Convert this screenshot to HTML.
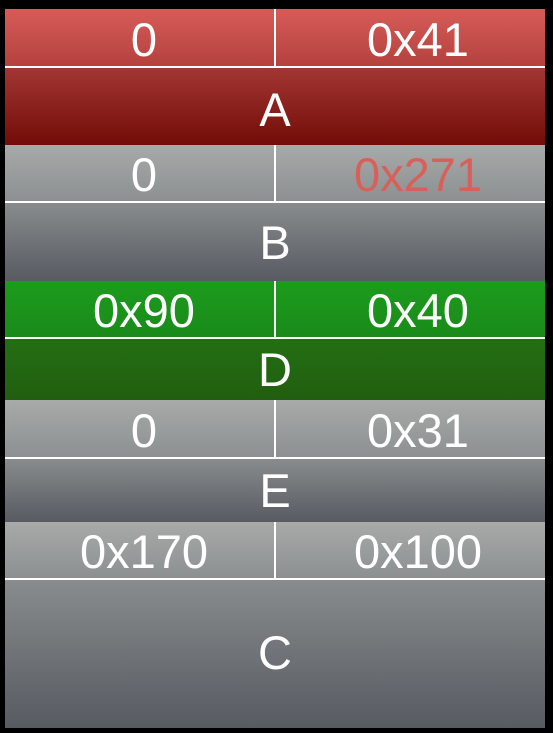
<!DOCTYPE html>
<html><head><meta charset="utf-8"><style>
html,body{margin:0;padding:0;background:#000;width:553px;height:733px;overflow:hidden}
.b{position:absolute;left:5px;width:540px;font-family:"Liberation Sans",sans-serif;color:#fff;font-size:47px}
.t{position:absolute;left:0;right:0;top:0}
.c{position:absolute;top:3px;bottom:0;display:flex;align-items:center;justify-content:center}
.l{left:4px;width:270px}.r{left:276px;width:274px}
.v{position:absolute;left:269px;width:2px;top:0;background:#fff}
.h{position:absolute;left:0;right:0;height:2px;background:#fff}
.lo{position:absolute;left:0;right:0;bottom:0;display:flex;align-items:center;justify-content:center}
.red .t{background:linear-gradient(#d75c58,#b4413e)}.red .lo{background:linear-gradient(#a33632,#720c07)}
.gr .t{background:linear-gradient(#a7aaa8,#8c9091)}.gr .lo{background:linear-gradient(#888c8d,#575b62)}
.gn .t{background:linear-gradient(#1c9c1d,#1a8a1a)}.gn .lo{background:linear-gradient(#236f13,#225e10)}
</style></head><body>

<div class="b red" style="top:9px;height:136px">
<div class="t" style="height:57px"><div class="c l">0</div><div class="c r">0x41</div></div>
<div class="v" style="height:59px"></div><div class="h" style="top:57px"></div>
<div class="lo" style="top:59px;padding-top:5px">A</div></div>

<div class="b gr" style="top:145px;height:136px">
<div class="t" style="height:56px"><div class="c l">0</div><div class="c r" style="color:#d9605a">0x271</div></div>
<div class="v" style="height:58px"></div><div class="h" style="top:56px"></div>
<div class="lo" style="top:58px">B</div></div>

<div class="b gn" style="top:281px;height:119px">
<div class="t" style="height:56px"><div class="c l">0x90</div><div class="c r">0x40</div></div>
<div class="v" style="height:58px"></div><div class="h" style="top:56px"></div>
<div class="lo" style="top:58px">D</div></div>

<div class="b gr" style="top:400px;height:122px">
<div class="t" style="height:57px"><div class="c l">0</div><div class="c r">0x31</div></div>
<div class="v" style="height:59px"></div><div class="h" style="top:57px"></div>
<div class="lo" style="top:59px">E</div></div>

<div class="b gr" style="top:522px;height:206px">
<div class="t" style="height:56px"><div class="c l">0x170</div><div class="c r">0x100</div></div>
<div class="v" style="height:58px"></div><div class="h" style="top:56px"></div>
<div class="lo" style="top:58px;padding-bottom:4px">C</div></div>

</body></html>
